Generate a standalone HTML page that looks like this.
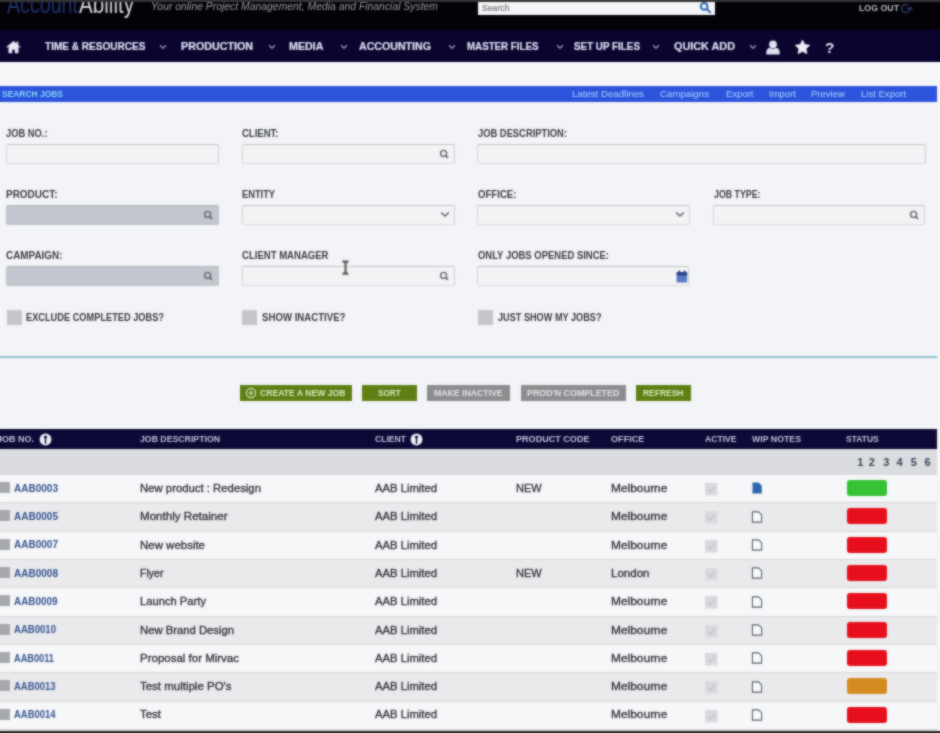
<!DOCTYPE html><html><head><meta charset="utf-8"><style>*{margin:0;padding:0;box-sizing:border-box}html,body{width:940px;height:733px;overflow:hidden;background:#f3f4f7;font-family:"Liberation Sans",sans-serif}.a{position:absolute;white-space:nowrap}.t{line-height:1}</style></head><body>
<div class="a" style="left:0;top:0;width:940px;height:733px;will-change:transform">
<div class="a" style="left:0;top:2px;width:940px;height:28px;background:#040209"></div>
<div class="a" style="left:478px;top:2px;width:237px;height:13px;background:#f6f6f9"></div>
<svg class="a" style="left:698px;top:1px" width="16" height="14" viewBox="0 0 16 14"><circle cx="6.2" cy="5.4" r="3.3" fill="none" stroke="#2c65b2" stroke-width="2"/><line x1="8.6" y1="7.9" x2="12.2" y2="11.2" stroke="#2c65b2" stroke-width="2.1" stroke-linecap="round"/></svg>
<svg class="a" style="left:900px;top:3px" width="13" height="11" viewBox="0 0 13 11"><path d="M8 2.2 A4 4 0 1 0 9.6 6.5" fill="none" stroke="#29345e" stroke-width="1.6"/><path d="M6.5 5.5 H12 M10 3.6 L12 5.5 L10 7.4" fill="none" stroke="#29345e" stroke-width="1.3"/></svg>
<div class="a" style="left:0;top:30px;width:940px;height:32px;background:#0b0430"></div>
<svg class="a" style="left:5px;top:40px" width="17" height="14" viewBox="0 0 17 14"><path d="M8.5 1 L1 7.2 L2.2 7.6 L3.5 6.6 V13.2 H7.2 V9.8 H9.8 V13.2 H13.5 V6.6 L14.8 7.6 L16 7.2 L13.3 4.9 V1.6 H11.6 V3.5 Z" fill="#e6eaf6"/></svg>
<svg class="a" style="left:159px;top:44px" width="8" height="6" viewBox="0 0 8 6"><path d="M1 1.2 L4 4.2 L7 1.2" fill="none" stroke="#8391c4" stroke-width="1.6"/></svg>
<svg class="a" style="left:268px;top:44px" width="8" height="6" viewBox="0 0 8 6"><path d="M1 1.2 L4 4.2 L7 1.2" fill="none" stroke="#8391c4" stroke-width="1.6"/></svg>
<svg class="a" style="left:340px;top:44px" width="8" height="6" viewBox="0 0 8 6"><path d="M1 1.2 L4 4.2 L7 1.2" fill="none" stroke="#8391c4" stroke-width="1.6"/></svg>
<svg class="a" style="left:448px;top:44px" width="8" height="6" viewBox="0 0 8 6"><path d="M1 1.2 L4 4.2 L7 1.2" fill="none" stroke="#8391c4" stroke-width="1.6"/></svg>
<svg class="a" style="left:556px;top:44px" width="8" height="6" viewBox="0 0 8 6"><path d="M1 1.2 L4 4.2 L7 1.2" fill="none" stroke="#8391c4" stroke-width="1.6"/></svg>
<svg class="a" style="left:652px;top:44px" width="8" height="6" viewBox="0 0 8 6"><path d="M1 1.2 L4 4.2 L7 1.2" fill="none" stroke="#8391c4" stroke-width="1.6"/></svg>
<svg class="a" style="left:748.5px;top:44px" width="8" height="6" viewBox="0 0 8 6"><path d="M1 1.2 L4 4.2 L7 1.2" fill="none" stroke="#8391c4" stroke-width="1.6"/></svg>
<svg class="a" style="left:765px;top:40px" width="16" height="15" viewBox="0 0 16 15"><circle cx="8" cy="4.3" r="3.9" fill="#dfe3f0"/><path d="M1.3 14.4 V11.8 C1.3 9.4 3.4 8 5 7.8 C6.8 9 9.2 9 11 7.8 C12.6 8 14.7 9.4 14.7 11.8 V14.4 Z" fill="#dfe3f0"/></svg>
<svg class="a" style="left:794px;top:39px" width="17" height="16" viewBox="0 0 17 16"><path d="M8.50 1.00 L10.67 5.61 L15.73 6.25 L12.02 9.74 L12.97 14.75 L8.50 12.30 L4.03 14.75 L4.98 9.74 L1.27 6.25 L6.33 5.61 Z" fill="#eef0f8" stroke="#eef0f8" stroke-width="0.8" stroke-linejoin="round"/></svg>
<div class="a" style="left:0;top:62px;width:940px;height:24px;background:#f6f6f8"></div>
<div class="a" style="left:0;top:62px;width:940px;height:2px;background:#fdfdfe"></div>
<div class="a" style="left:0;top:86px;width:937px;height:16px;background:#2d54dc"></div>
<div class="a" style="left:6px;top:144px;width:213px;height:20px;background:#f3f3f5;border:1px solid #d6d6d9;border-top-color:#c6c6c9;border-right-color:#d0d0d3;border-bottom-color:#dcdcdf;border-radius:2px"></div>
<div class="a" style="left:242px;top:144px;width:213px;height:20px;background:#f3f3f5;border:1px solid #d6d6d9;border-top-color:#c6c6c9;border-right-color:#d0d0d3;border-bottom-color:#dcdcdf;border-radius:2px"></div>
<svg class="a" style="left:439px;top:149px" width="10" height="10" viewBox="0 0 10 10"><circle cx="4.6" cy="4.4" r="3" fill="none" stroke="#616469" stroke-width="1.4"/><line x1="6.7" y1="6.5" x2="9" y2="8.8" stroke="#616469" stroke-width="1.7"/></svg>
<div class="a" style="left:477px;top:144px;width:449px;height:20px;background:#f3f3f5;border:1px solid #d6d6d9;border-top-color:#c6c6c9;border-right-color:#d0d0d3;border-bottom-color:#dcdcdf;border-radius:2px"></div>
<div class="a" style="left:6px;top:205px;width:213px;height:20px;background:#c4c7ce;border:1px solid #c0c3ca;border-top-color:#b3b6bd;border-radius:2px"></div>
<svg class="a" style="left:203px;top:210px" width="10" height="10" viewBox="0 0 10 10"><circle cx="4.6" cy="4.4" r="3" fill="none" stroke="#616469" stroke-width="1.4"/><line x1="6.7" y1="6.5" x2="9" y2="8.8" stroke="#616469" stroke-width="1.7"/></svg>
<div class="a" style="left:242px;top:205px;width:213px;height:20px;background:#f3f3f5;border:1px solid #d6d6d9;border-top-color:#c6c6c9;border-right-color:#d0d0d3;border-bottom-color:#dcdcdf;border-radius:2px"></div>
<svg class="a" style="left:440px;top:211px" width="10" height="7" viewBox="0 0 10 7"><path d="M1.2 1.5 L5 5 L8.8 1.5" fill="none" stroke="#5c5e63" stroke-width="1.4"/></svg>
<div class="a" style="left:477px;top:205px;width:213px;height:20px;background:#f3f3f5;border:1px solid #d6d6d9;border-top-color:#c6c6c9;border-right-color:#d0d0d3;border-bottom-color:#dcdcdf;border-radius:2px"></div>
<svg class="a" style="left:675px;top:211px" width="10" height="7" viewBox="0 0 10 7"><path d="M1.2 1.5 L5 5 L8.8 1.5" fill="none" stroke="#5c5e63" stroke-width="1.4"/></svg>
<div class="a" style="left:713px;top:205px;width:212px;height:20px;background:#f3f3f5;border:1px solid #d6d6d9;border-top-color:#c6c6c9;border-right-color:#d0d0d3;border-bottom-color:#dcdcdf;border-radius:2px"></div>
<svg class="a" style="left:909px;top:210px" width="10" height="10" viewBox="0 0 10 10"><circle cx="4.6" cy="4.4" r="3" fill="none" stroke="#616469" stroke-width="1.4"/><line x1="6.7" y1="6.5" x2="9" y2="8.8" stroke="#616469" stroke-width="1.7"/></svg>
<div class="a" style="left:6px;top:266px;width:213px;height:20px;background:#c4c7ce;border:1px solid #c0c3ca;border-top-color:#b3b6bd;border-radius:2px"></div>
<svg class="a" style="left:203px;top:271px" width="10" height="10" viewBox="0 0 10 10"><circle cx="4.6" cy="4.4" r="3" fill="none" stroke="#616469" stroke-width="1.4"/><line x1="6.7" y1="6.5" x2="9" y2="8.8" stroke="#616469" stroke-width="1.7"/></svg>
<div class="a" style="left:242px;top:266px;width:213px;height:20px;background:#f3f3f5;border:1px solid #d6d6d9;border-top-color:#c6c6c9;border-right-color:#d0d0d3;border-bottom-color:#dcdcdf;border-radius:2px"></div>
<svg class="a" style="left:439px;top:271px" width="10" height="10" viewBox="0 0 10 10"><circle cx="4.6" cy="4.4" r="3" fill="none" stroke="#616469" stroke-width="1.4"/><line x1="6.7" y1="6.5" x2="9" y2="8.8" stroke="#616469" stroke-width="1.7"/></svg>
<div class="a" style="left:477px;top:266px;width:212px;height:20px;background:#f3f3f5;border:1px solid #d6d6d9;border-top-color:#c6c6c9;border-right-color:#d0d0d3;border-bottom-color:#dcdcdf;border-radius:2px"></div>
<svg class="a" style="left:676px;top:269.5px" width="12" height="13" viewBox="0 0 12 13"><rect x="0.6" y="2" width="10.6" height="10.4" rx="1.2" fill="#5a7bc2"/><rect x="0.6" y="2" width="10.6" height="3.4" rx="1" fill="#2c4587"/><rect x="2.4" y="0.6" width="1.8" height="2.6" rx="0.6" fill="#2c4587"/><rect x="7.6" y="0.6" width="1.8" height="2.6" rx="0.6" fill="#2c4587"/></svg>
<svg class="a" style="left:341px;top:260px" width="9" height="16" viewBox="0 0 9 16"><path d="M1.3 0.6 H7.6 V2 L5.6 3.6 V11.8 L7.6 13.4 V14.8 H1.3 V13.4 L3.4 11.8 V3.6 L1.3 2 Z" fill="#606062"/></svg>
<div class="a" style="left:7px;top:310px;width:15px;height:15px;background:#c6c7ca"></div>
<div class="a" style="left:242px;top:310px;width:15px;height:15px;background:#c6c7ca"></div>
<div class="a" style="left:478px;top:310px;width:15px;height:15px;background:#c6c7ca"></div>
<div class="a" style="left:0;top:356px;width:937px;height:2px;background:#8fc2cf"></div>
<div class="a" style="left:240px;top:385px;width:112px;height:15.5px;background:#5f7f15"></div>
<svg class="a" style="left:245px;top:387px" width="12" height="12" viewBox="0 0 12 12"><circle cx="6" cy="6" r="4.6" fill="none" stroke="#dfe8c8" stroke-width="1.1"/><path d="M6 3.6 V8.4 M3.6 6 H8.4" stroke="#dfe8c8" stroke-width="1.1"/></svg>
<div class="a" style="left:362px;top:385px;width:55px;height:15.5px;background:#5f7f15"></div>
<div class="a" style="left:427px;top:385px;width:83px;height:15.5px;background:#8d8e91"></div>
<div class="a" style="left:521px;top:385px;width:105px;height:15.5px;background:#8d8e91"></div>
<div class="a" style="left:636px;top:385px;width:55px;height:15.5px;background:#5f7f15"></div>
<div class="a" style="left:0;top:429px;width:937px;height:20px;background:#0d0a38"></div>
<svg class="a" style="left:39px;top:432.5px" width="13" height="13" viewBox="0 0 13 13"><circle cx="6.5" cy="6.5" r="5.9" fill="#eef0f6"/><circle cx="6.5" cy="4" r="1.6" fill="#0d0a38"/><path d="M5.8 5 H7.2 V10.8 H5.8 Z" fill="#0d0a38"/></svg>
<svg class="a" style="left:410px;top:432.5px" width="13" height="13" viewBox="0 0 13 13"><circle cx="6.5" cy="6.5" r="5.9" fill="#eef0f6"/><circle cx="6.5" cy="4" r="1.6" fill="#0d0a38"/><path d="M5.8 5 H7.2 V10.8 H5.8 Z" fill="#0d0a38"/></svg>
<div class="a" style="left:0;top:449px;width:937px;height:26px;background:#dbdcdf"></div>
<div class="a" style="left:0;top:475.0px;width:937px;height:28px;background:#f6f7f9"></div>
<div class="a" style="left:0;top:502.3px;width:937px;height:2px;background:#dadadd"></div>
<div class="a" style="left:0;top:482.0px;width:10px;height:11px;background:#a8a9ac"></div>
<svg class="a" style="left:704.5px;top:483.0px" width="13" height="13" viewBox="0 0 13 13"><rect x="0" y="0" width="12.5" height="12.5" fill="#d9dadd"/><path d="M3 6.3 L5.6 8.8 L10 3.8" fill="none" stroke="#c0c1c5" stroke-width="1.2"/></svg>
<svg class="a" style="left:751px;top:482.0px" width="12" height="12" viewBox="0 0 12 12"><path d="M1.5 0.5 H7.5 L10.8 3.8 V11.5 H1.5 Z" fill="#2b68ad"/></svg>
<div class="a" style="left:847px;top:480.0px;width:40px;height:16px;border-radius:3px;background:#36c236"></div>
<div class="a" style="left:0;top:503.33px;width:937px;height:28px;background:#eaeaed"></div>
<div class="a" style="left:0;top:530.63px;width:937px;height:2px;background:#dadadd"></div>
<div class="a" style="left:0;top:510.33px;width:10px;height:11px;background:#a8a9ac"></div>
<svg class="a" style="left:704.5px;top:511.33px" width="13" height="13" viewBox="0 0 13 13"><rect x="0" y="0" width="12.5" height="12.5" fill="#d9dadd"/><path d="M3 6.3 L5.6 8.8 L10 3.8" fill="none" stroke="#c0c1c5" stroke-width="1.2"/></svg>
<svg class="a" style="left:751px;top:510.83px" width="12" height="12" viewBox="0 0 12 12"><path d="M1.4 0.9 H7.6 L10.6 3.9 V11.1 H1.4 Z" fill="#fafafc" stroke="#56606c" stroke-width="1.1" stroke-linejoin="round"/></svg>
<div class="a" style="left:847px;top:508.33px;width:40px;height:16px;border-radius:3px;background:#e6101c"></div>
<div class="a" style="left:0;top:531.66px;width:937px;height:28px;background:#f6f7f9"></div>
<div class="a" style="left:0;top:558.9599999999999px;width:937px;height:2px;background:#dadadd"></div>
<div class="a" style="left:0;top:538.66px;width:10px;height:11px;background:#a8a9ac"></div>
<svg class="a" style="left:704.5px;top:539.66px" width="13" height="13" viewBox="0 0 13 13"><rect x="0" y="0" width="12.5" height="12.5" fill="#d9dadd"/><path d="M3 6.3 L5.6 8.8 L10 3.8" fill="none" stroke="#c0c1c5" stroke-width="1.2"/></svg>
<svg class="a" style="left:751px;top:539.16px" width="12" height="12" viewBox="0 0 12 12"><path d="M1.4 0.9 H7.6 L10.6 3.9 V11.1 H1.4 Z" fill="#fafafc" stroke="#56606c" stroke-width="1.1" stroke-linejoin="round"/></svg>
<div class="a" style="left:847px;top:536.66px;width:40px;height:16px;border-radius:3px;background:#e6101c"></div>
<div class="a" style="left:0;top:559.99px;width:937px;height:28px;background:#eaeaed"></div>
<div class="a" style="left:0;top:587.29px;width:937px;height:2px;background:#dadadd"></div>
<div class="a" style="left:0;top:566.99px;width:10px;height:11px;background:#a8a9ac"></div>
<svg class="a" style="left:704.5px;top:567.99px" width="13" height="13" viewBox="0 0 13 13"><rect x="0" y="0" width="12.5" height="12.5" fill="#d9dadd"/><path d="M3 6.3 L5.6 8.8 L10 3.8" fill="none" stroke="#c0c1c5" stroke-width="1.2"/></svg>
<svg class="a" style="left:751px;top:567.49px" width="12" height="12" viewBox="0 0 12 12"><path d="M1.4 0.9 H7.6 L10.6 3.9 V11.1 H1.4 Z" fill="#fafafc" stroke="#56606c" stroke-width="1.1" stroke-linejoin="round"/></svg>
<div class="a" style="left:847px;top:564.99px;width:40px;height:16px;border-radius:3px;background:#e6101c"></div>
<div class="a" style="left:0;top:588.32px;width:937px;height:28px;background:#f6f7f9"></div>
<div class="a" style="left:0;top:615.62px;width:937px;height:2px;background:#dadadd"></div>
<div class="a" style="left:0;top:595.32px;width:10px;height:11px;background:#a8a9ac"></div>
<svg class="a" style="left:704.5px;top:596.32px" width="13" height="13" viewBox="0 0 13 13"><rect x="0" y="0" width="12.5" height="12.5" fill="#d9dadd"/><path d="M3 6.3 L5.6 8.8 L10 3.8" fill="none" stroke="#c0c1c5" stroke-width="1.2"/></svg>
<svg class="a" style="left:751px;top:595.82px" width="12" height="12" viewBox="0 0 12 12"><path d="M1.4 0.9 H7.6 L10.6 3.9 V11.1 H1.4 Z" fill="#fafafc" stroke="#56606c" stroke-width="1.1" stroke-linejoin="round"/></svg>
<div class="a" style="left:847px;top:593.32px;width:40px;height:16px;border-radius:3px;background:#e6101c"></div>
<div class="a" style="left:0;top:616.65px;width:937px;height:28px;background:#eaeaed"></div>
<div class="a" style="left:0;top:643.9499999999999px;width:937px;height:2px;background:#dadadd"></div>
<div class="a" style="left:0;top:623.65px;width:10px;height:11px;background:#a8a9ac"></div>
<svg class="a" style="left:704.5px;top:624.65px" width="13" height="13" viewBox="0 0 13 13"><rect x="0" y="0" width="12.5" height="12.5" fill="#d9dadd"/><path d="M3 6.3 L5.6 8.8 L10 3.8" fill="none" stroke="#c0c1c5" stroke-width="1.2"/></svg>
<svg class="a" style="left:751px;top:624.15px" width="12" height="12" viewBox="0 0 12 12"><path d="M1.4 0.9 H7.6 L10.6 3.9 V11.1 H1.4 Z" fill="#fafafc" stroke="#56606c" stroke-width="1.1" stroke-linejoin="round"/></svg>
<div class="a" style="left:847px;top:621.65px;width:40px;height:16px;border-radius:3px;background:#e6101c"></div>
<div class="a" style="left:0;top:644.98px;width:937px;height:28px;background:#f6f7f9"></div>
<div class="a" style="left:0;top:672.28px;width:937px;height:2px;background:#dadadd"></div>
<div class="a" style="left:0;top:651.98px;width:10px;height:11px;background:#a8a9ac"></div>
<svg class="a" style="left:704.5px;top:652.98px" width="13" height="13" viewBox="0 0 13 13"><rect x="0" y="0" width="12.5" height="12.5" fill="#d9dadd"/><path d="M3 6.3 L5.6 8.8 L10 3.8" fill="none" stroke="#c0c1c5" stroke-width="1.2"/></svg>
<svg class="a" style="left:751px;top:652.48px" width="12" height="12" viewBox="0 0 12 12"><path d="M1.4 0.9 H7.6 L10.6 3.9 V11.1 H1.4 Z" fill="#fafafc" stroke="#56606c" stroke-width="1.1" stroke-linejoin="round"/></svg>
<div class="a" style="left:847px;top:649.98px;width:40px;height:16px;border-radius:3px;background:#e6101c"></div>
<div class="a" style="left:0;top:673.31px;width:937px;height:28px;background:#eaeaed"></div>
<div class="a" style="left:0;top:700.6099999999999px;width:937px;height:2px;background:#dadadd"></div>
<div class="a" style="left:0;top:680.31px;width:10px;height:11px;background:#a8a9ac"></div>
<svg class="a" style="left:704.5px;top:681.31px" width="13" height="13" viewBox="0 0 13 13"><rect x="0" y="0" width="12.5" height="12.5" fill="#d9dadd"/><path d="M3 6.3 L5.6 8.8 L10 3.8" fill="none" stroke="#c0c1c5" stroke-width="1.2"/></svg>
<svg class="a" style="left:751px;top:680.81px" width="12" height="12" viewBox="0 0 12 12"><path d="M1.4 0.9 H7.6 L10.6 3.9 V11.1 H1.4 Z" fill="#fafafc" stroke="#56606c" stroke-width="1.1" stroke-linejoin="round"/></svg>
<div class="a" style="left:847px;top:678.31px;width:40px;height:16px;border-radius:3px;background:#d48c22"></div>
<div class="a" style="left:0;top:701.64px;width:937px;height:28px;background:#f6f7f9"></div>
<div class="a" style="left:0;top:728.9399999999999px;width:937px;height:2px;background:#dadadd"></div>
<div class="a" style="left:0;top:708.64px;width:10px;height:11px;background:#a8a9ac"></div>
<svg class="a" style="left:704.5px;top:709.64px" width="13" height="13" viewBox="0 0 13 13"><rect x="0" y="0" width="12.5" height="12.5" fill="#d9dadd"/><path d="M3 6.3 L5.6 8.8 L10 3.8" fill="none" stroke="#c0c1c5" stroke-width="1.2"/></svg>
<svg class="a" style="left:751px;top:709.14px" width="12" height="12" viewBox="0 0 12 12"><path d="M1.4 0.9 H7.6 L10.6 3.9 V11.1 H1.4 Z" fill="#fafafc" stroke="#56606c" stroke-width="1.1" stroke-linejoin="round"/></svg>
<div class="a" style="left:847px;top:706.64px;width:40px;height:16px;border-radius:3px;background:#e6101c"></div>
<div class="a" style="left:0;top:731px;width:940px;height:2px;background:#2a2a2c"></div>
<div class="a t" style="left:7.00px;top:-9.01px;font-size:26px;font-weight:400;font-style:normal;color:#1e336c;transform:scaleX(0.7557);transform-origin:0 0;">Account</div>
<div class="a t" style="left:79.00px;top:-9.01px;font-size:26px;font-weight:400;font-style:normal;color:#d8d8de;transform:scaleX(0.7930);transform-origin:0 0;">Ability</div>
<div class="a t" style="left:151.00px;top:2.04px;font-size:10px;font-weight:400;font-style:italic;color:#9a9a9e;transform:scaleX(1.0389);transform-origin:0 0;">Your online Project Management, Media and Financial System</div>
<div class="a t" style="left:482.00px;top:3.81px;font-size:9.2px;font-weight:400;font-style:normal;color:#78787c;transform:scaleX(0.9442);transform-origin:0 0;-webkit-text-stroke:0.2px #78787c;">Search</div>
<div class="a t" style="left:859.00px;top:3.16px;font-size:9.5px;font-weight:700;font-style:normal;color:#bdbdc2;transform:scaleX(0.9242);transform-origin:0 0;">LOG OUT</div>
<div class="a t" style="left:44.50px;top:41.29px;font-size:11px;font-weight:700;font-style:normal;color:#dde2f4;transform:scaleX(0.9135);transform-origin:0 0;-webkit-text-stroke:0.2px #dde2f4;">TIME &amp; RESOURCES</div>
<div class="a t" style="left:181.00px;top:41.29px;font-size:11px;font-weight:700;font-style:normal;color:#dde2f4;transform:scaleX(0.9736);transform-origin:0 0;-webkit-text-stroke:0.2px #dde2f4;">PRODUCTION</div>
<div class="a t" style="left:288.50px;top:41.29px;font-size:11px;font-weight:700;font-style:normal;color:#dde2f4;transform:scaleX(0.9731);transform-origin:0 0;-webkit-text-stroke:0.2px #dde2f4;">MEDIA</div>
<div class="a t" style="left:359.00px;top:41.29px;font-size:11px;font-weight:700;font-style:normal;color:#dde2f4;transform:scaleX(0.9656);transform-origin:0 0;-webkit-text-stroke:0.2px #dde2f4;">ACCOUNTING</div>
<div class="a t" style="left:467.00px;top:41.29px;font-size:11px;font-weight:700;font-style:normal;color:#dde2f4;transform:scaleX(0.8863);transform-origin:0 0;-webkit-text-stroke:0.2px #dde2f4;">MASTER FILES</div>
<div class="a t" style="left:574.00px;top:41.29px;font-size:11px;font-weight:700;font-style:normal;color:#dde2f4;transform:scaleX(0.8947);transform-origin:0 0;-webkit-text-stroke:0.2px #dde2f4;">SET UP FILES</div>
<div class="a t" style="left:674.00px;top:41.29px;font-size:11px;font-weight:700;font-style:normal;color:#dde2f4;transform:scaleX(0.9849);transform-origin:0 0;-webkit-text-stroke:0.2px #dde2f4;">QUICK ADD</div>
<div class="a t" style="left:825.20px;top:40.93px;font-size:14.5px;font-weight:700;font-style:normal;color:#dfe6f4;transform:scaleX(1.0610);transform-origin:0 0;">?</div>
<div class="a t" style="left:2.00px;top:89.46px;font-size:9.5px;font-weight:700;font-style:normal;color:#86d8f8;transform:scaleX(0.8889);transform-origin:0 0;">SEARCH JOBS</div>
<div class="a t" style="left:571.70px;top:89.46px;font-size:9.5px;font-weight:400;font-style:normal;color:#a6d6ff;transform:scaleX(1.0158);transform-origin:0 0;">Latest Deadlines</div>
<div class="a t" style="left:660.00px;top:89.46px;font-size:9.5px;font-weight:400;font-style:normal;color:#a6d6ff;transform:scaleX(1.0195);transform-origin:0 0;">Campaigns</div>
<div class="a t" style="left:725.50px;top:89.46px;font-size:9.5px;font-weight:400;font-style:normal;color:#a6d6ff;transform:scaleX(1.0011);transform-origin:0 0;">Export</div>
<div class="a t" style="left:768.70px;top:89.46px;font-size:9.5px;font-weight:400;font-style:normal;color:#a6d6ff;transform:scaleX(1.0023);transform-origin:0 0;">Import</div>
<div class="a t" style="left:810.90px;top:89.46px;font-size:9.5px;font-weight:400;font-style:normal;color:#a6d6ff;transform:scaleX(1.0001);transform-origin:0 0;">Preview</div>
<div class="a t" style="left:860.90px;top:89.46px;font-size:9.5px;font-weight:400;font-style:normal;color:#a6d6ff;transform:scaleX(1.0047);transform-origin:0 0;">List Export</div>
<div class="a t" style="left:6.00px;top:129.03px;font-size:10px;font-weight:700;font-style:normal;color:#3a3c41;transform:scaleX(0.9336);transform-origin:0 0;">JOB NO.:</div>
<div class="a t" style="left:242.00px;top:129.03px;font-size:10px;font-weight:700;font-style:normal;color:#3a3c41;transform:scaleX(0.9519);transform-origin:0 0;">CLIENT:</div>
<div class="a t" style="left:477.50px;top:129.03px;font-size:10px;font-weight:700;font-style:normal;color:#3a3c41;transform:scaleX(0.9367);transform-origin:0 0;">JOB DESCRIPTION:</div>
<div class="a t" style="left:6.00px;top:190.13px;font-size:10px;font-weight:700;font-style:normal;color:#3a3c41;transform:scaleX(0.9967);transform-origin:0 0;">PRODUCT:</div>
<div class="a t" style="left:242.00px;top:190.13px;font-size:10px;font-weight:700;font-style:normal;color:#3a3c41;transform:scaleX(0.9279);transform-origin:0 0;">ENTITY</div>
<div class="a t" style="left:477.50px;top:190.13px;font-size:10px;font-weight:700;font-style:normal;color:#3a3c41;transform:scaleX(0.9625);transform-origin:0 0;">OFFICE:</div>
<div class="a t" style="left:713.50px;top:190.13px;font-size:10px;font-weight:700;font-style:normal;color:#3a3c41;transform:scaleX(0.8807);transform-origin:0 0;">JOB TYPE:</div>
<div class="a t" style="left:6.00px;top:251.14px;font-size:10px;font-weight:700;font-style:normal;color:#3a3c41;transform:scaleX(0.9907);transform-origin:0 0;">CAMPAIGN:</div>
<div class="a t" style="left:242.00px;top:251.14px;font-size:10px;font-weight:700;font-style:normal;color:#3a3c41;transform:scaleX(0.9551);transform-origin:0 0;">CLIENT MANAGER</div>
<div class="a t" style="left:477.50px;top:251.14px;font-size:10px;font-weight:700;font-style:normal;color:#3a3c41;transform:scaleX(0.9467);transform-origin:0 0;">ONLY JOBS OPENED SINCE:</div>
<div class="a t" style="left:26.00px;top:312.84px;font-size:10px;font-weight:700;font-style:normal;color:#3a3c41;transform:scaleX(0.9233);transform-origin:0 0;">EXCLUDE COMPLETED JOBS?</div>
<div class="a t" style="left:261.50px;top:312.84px;font-size:10px;font-weight:700;font-style:normal;color:#3a3c41;transform:scaleX(0.9634);transform-origin:0 0;">SHOW INACTIVE?</div>
<div class="a t" style="left:497.50px;top:312.84px;font-size:10px;font-weight:700;font-style:normal;color:#3a3c41;transform:scaleX(0.9145);transform-origin:0 0;">JUST SHOW MY JOBS?</div>
<div class="a t" style="left:259.90px;top:388.95px;font-size:8.8px;font-weight:700;font-style:normal;color:#dbe8bd;transform:scaleX(0.9808);transform-origin:0 0;">CREATE A NEW JOB</div>
<div class="a t" style="left:377.70px;top:388.95px;font-size:8.8px;font-weight:700;font-style:normal;color:#dbe8bd;transform:scaleX(0.9289);transform-origin:0 0;">SORT</div>
<div class="a t" style="left:433.80px;top:388.95px;font-size:8.8px;font-weight:700;font-style:normal;color:#e2e2e4;transform:scaleX(0.9884);transform-origin:0 0;">MAKE INACTIVE</div>
<div class="a t" style="left:527.10px;top:388.95px;font-size:8.8px;font-weight:700;font-style:normal;color:#e2e2e4;transform:scaleX(1.0084);transform-origin:0 0;">PROD'N COMPLETED</div>
<div class="a t" style="left:643.30px;top:388.95px;font-size:8.8px;font-weight:700;font-style:normal;color:#dbe8bd;transform:scaleX(0.9608);transform-origin:0 0;">REFRESH</div>
<div class="a t" style="left:-3.00px;top:433.90px;font-size:9.8px;font-weight:700;font-style:normal;color:#bcc1da;transform:scaleX(0.9182);transform-origin:0 0;">JOB NO.</div>
<div class="a t" style="left:140.00px;top:433.90px;font-size:9.8px;font-weight:700;font-style:normal;color:#bcc1da;transform:scaleX(0.8906);transform-origin:0 0;">JOB DESCRIPTION</div>
<div class="a t" style="left:375.20px;top:433.90px;font-size:9.8px;font-weight:700;font-style:normal;color:#bcc1da;transform:scaleX(0.8792);transform-origin:0 0;">CLIENT</div>
<div class="a t" style="left:516.20px;top:433.90px;font-size:9.8px;font-weight:700;font-style:normal;color:#bcc1da;transform:scaleX(0.9249);transform-origin:0 0;">PRODUCT CODE</div>
<div class="a t" style="left:610.60px;top:433.90px;font-size:9.8px;font-weight:700;font-style:normal;color:#bcc1da;transform:scaleX(0.9298);transform-origin:0 0;">OFFICE</div>
<div class="a t" style="left:705.00px;top:433.90px;font-size:9.8px;font-weight:700;font-style:normal;color:#bcc1da;transform:scaleX(0.8765);transform-origin:0 0;">ACTIVE</div>
<div class="a t" style="left:752.00px;top:433.90px;font-size:9.8px;font-weight:700;font-style:normal;color:#bcc1da;transform:scaleX(0.8942);transform-origin:0 0;">WIP NOTES</div>
<div class="a t" style="left:846.00px;top:433.90px;font-size:9.8px;font-weight:700;font-style:normal;color:#bcc1da;transform:scaleX(0.8666);transform-origin:0 0;">STATUS</div>
<div class="a t" style="left:857.24px;top:456.99px;font-size:11px;font-weight:700;font-style:normal;color:#3a4458;">1</div>
<div class="a t" style="left:868.84px;top:456.99px;font-size:11px;font-weight:700;font-style:normal;color:#3a4458;">2</div>
<div class="a t" style="left:883.14px;top:456.99px;font-size:11px;font-weight:700;font-style:normal;color:#3a4458;">3</div>
<div class="a t" style="left:896.54px;top:456.99px;font-size:11px;font-weight:700;font-style:normal;color:#3a4458;">4</div>
<div class="a t" style="left:910.64px;top:456.99px;font-size:11px;font-weight:700;font-style:normal;color:#3a4458;">5</div>
<div class="a t" style="left:924.54px;top:456.99px;font-size:11px;font-weight:700;font-style:normal;color:#3a4458;">6</div>
<div class="a t" style="left:14.30px;top:483.84px;font-size:10px;font-weight:700;font-style:normal;color:#36548f;transform:scaleX(1.0018);transform-origin:0 0;">AAB0003</div>
<div class="a t" style="left:140.00px;top:482.85px;font-size:11.4px;font-weight:400;font-style:normal;color:#34363b;transform:scaleX(0.9952);transform-origin:0 0;-webkit-text-stroke:0.35px #34363b;">New product : Redesign</div>
<div class="a t" style="left:375.00px;top:482.85px;font-size:11.4px;font-weight:400;font-style:normal;color:#34363b;transform:scaleX(0.9890);transform-origin:0 0;-webkit-text-stroke:0.35px #34363b;">AAB Limited</div>
<div class="a t" style="left:516.00px;top:482.85px;font-size:11.4px;font-weight:400;font-style:normal;color:#34363b;transform:scaleX(0.9632);transform-origin:0 0;-webkit-text-stroke:0.35px #34363b;">NEW</div>
<div class="a t" style="left:611.00px;top:482.85px;font-size:11.4px;font-weight:400;font-style:normal;color:#34363b;transform:scaleX(1.0478);transform-origin:0 0;-webkit-text-stroke:0.35px #34363b;">Melbourne</div>
<div class="a t" style="left:14.30px;top:512.16px;font-size:10px;font-weight:700;font-style:normal;color:#36548f;transform:scaleX(1.0018);transform-origin:0 0;">AAB0005</div>
<div class="a t" style="left:140.00px;top:511.18px;font-size:11.4px;font-weight:400;font-style:normal;color:#34363b;transform:scaleX(1.0173);transform-origin:0 0;-webkit-text-stroke:0.35px #34363b;">Monthly Retainer</div>
<div class="a t" style="left:375.00px;top:511.18px;font-size:11.4px;font-weight:400;font-style:normal;color:#34363b;transform:scaleX(0.9890);transform-origin:0 0;-webkit-text-stroke:0.35px #34363b;">AAB Limited</div>
<div class="a t" style="left:611.00px;top:511.18px;font-size:11.4px;font-weight:400;font-style:normal;color:#34363b;transform:scaleX(1.0478);transform-origin:0 0;-webkit-text-stroke:0.35px #34363b;">Melbourne</div>
<div class="a t" style="left:14.30px;top:540.49px;font-size:10px;font-weight:700;font-style:normal;color:#36548f;transform:scaleX(1.0018);transform-origin:0 0;">AAB0007</div>
<div class="a t" style="left:140.00px;top:539.51px;font-size:11.4px;font-weight:400;font-style:normal;color:#34363b;transform:scaleX(1.0065);transform-origin:0 0;-webkit-text-stroke:0.35px #34363b;">New website</div>
<div class="a t" style="left:375.00px;top:539.51px;font-size:11.4px;font-weight:400;font-style:normal;color:#34363b;transform:scaleX(0.9890);transform-origin:0 0;-webkit-text-stroke:0.35px #34363b;">AAB Limited</div>
<div class="a t" style="left:611.00px;top:539.51px;font-size:11.4px;font-weight:400;font-style:normal;color:#34363b;transform:scaleX(1.0478);transform-origin:0 0;-webkit-text-stroke:0.35px #34363b;">Melbourne</div>
<div class="a t" style="left:14.30px;top:568.82px;font-size:10px;font-weight:700;font-style:normal;color:#36548f;transform:scaleX(1.0018);transform-origin:0 0;">AAB0008</div>
<div class="a t" style="left:140.00px;top:567.84px;font-size:11.4px;font-weight:400;font-style:normal;color:#34363b;transform:scaleX(0.9284);transform-origin:0 0;-webkit-text-stroke:0.35px #34363b;">Flyer</div>
<div class="a t" style="left:375.00px;top:567.84px;font-size:11.4px;font-weight:400;font-style:normal;color:#34363b;transform:scaleX(0.9890);transform-origin:0 0;-webkit-text-stroke:0.35px #34363b;">AAB Limited</div>
<div class="a t" style="left:516.00px;top:567.84px;font-size:11.4px;font-weight:400;font-style:normal;color:#34363b;transform:scaleX(0.9632);transform-origin:0 0;-webkit-text-stroke:0.35px #34363b;">NEW</div>
<div class="a t" style="left:611.00px;top:567.84px;font-size:11.4px;font-weight:400;font-style:normal;color:#34363b;transform:scaleX(1.0127);transform-origin:0 0;-webkit-text-stroke:0.35px #34363b;">London</div>
<div class="a t" style="left:14.30px;top:597.15px;font-size:10px;font-weight:700;font-style:normal;color:#36548f;transform:scaleX(0.9904);transform-origin:0 0;">AAB0009</div>
<div class="a t" style="left:140.00px;top:596.17px;font-size:11.4px;font-weight:400;font-style:normal;color:#34363b;transform:scaleX(0.9832);transform-origin:0 0;-webkit-text-stroke:0.35px #34363b;">Launch Party</div>
<div class="a t" style="left:375.00px;top:596.17px;font-size:11.4px;font-weight:400;font-style:normal;color:#34363b;transform:scaleX(0.9890);transform-origin:0 0;-webkit-text-stroke:0.35px #34363b;">AAB Limited</div>
<div class="a t" style="left:611.00px;top:596.17px;font-size:11.4px;font-weight:400;font-style:normal;color:#34363b;transform:scaleX(1.0478);transform-origin:0 0;-webkit-text-stroke:0.35px #34363b;">Melbourne</div>
<div class="a t" style="left:14.30px;top:625.48px;font-size:10px;font-weight:700;font-style:normal;color:#36548f;transform:scaleX(0.9562);transform-origin:0 0;">AAB0010</div>
<div class="a t" style="left:140.00px;top:624.50px;font-size:11.4px;font-weight:400;font-style:normal;color:#34363b;transform:scaleX(0.9898);transform-origin:0 0;-webkit-text-stroke:0.35px #34363b;">New Brand Design</div>
<div class="a t" style="left:375.00px;top:624.50px;font-size:11.4px;font-weight:400;font-style:normal;color:#34363b;transform:scaleX(0.9890);transform-origin:0 0;-webkit-text-stroke:0.35px #34363b;">AAB Limited</div>
<div class="a t" style="left:611.00px;top:624.50px;font-size:11.4px;font-weight:400;font-style:normal;color:#34363b;transform:scaleX(1.0478);transform-origin:0 0;-webkit-text-stroke:0.35px #34363b;">Melbourne</div>
<div class="a t" style="left:14.30px;top:653.81px;font-size:10px;font-weight:700;font-style:normal;color:#36548f;transform:scaleX(0.9225);transform-origin:0 0;">AAB0011</div>
<div class="a t" style="left:140.00px;top:652.83px;font-size:11.4px;font-weight:400;font-style:normal;color:#34363b;transform:scaleX(1.0089);transform-origin:0 0;-webkit-text-stroke:0.35px #34363b;">Proposal for Mirvac</div>
<div class="a t" style="left:375.00px;top:652.83px;font-size:11.4px;font-weight:400;font-style:normal;color:#34363b;transform:scaleX(0.9890);transform-origin:0 0;-webkit-text-stroke:0.35px #34363b;">AAB Limited</div>
<div class="a t" style="left:611.00px;top:652.83px;font-size:11.4px;font-weight:400;font-style:normal;color:#34363b;transform:scaleX(1.0478);transform-origin:0 0;-webkit-text-stroke:0.35px #34363b;">Melbourne</div>
<div class="a t" style="left:14.30px;top:682.14px;font-size:10px;font-weight:700;font-style:normal;color:#36548f;transform:scaleX(0.9449);transform-origin:0 0;">AAB0013</div>
<div class="a t" style="left:140.00px;top:681.16px;font-size:11.4px;font-weight:400;font-style:normal;color:#34363b;transform:scaleX(1.0077);transform-origin:0 0;-webkit-text-stroke:0.35px #34363b;">Test multiple PO&#39;s</div>
<div class="a t" style="left:375.00px;top:681.16px;font-size:11.4px;font-weight:400;font-style:normal;color:#34363b;transform:scaleX(0.9890);transform-origin:0 0;-webkit-text-stroke:0.35px #34363b;">AAB Limited</div>
<div class="a t" style="left:611.00px;top:681.16px;font-size:11.4px;font-weight:400;font-style:normal;color:#34363b;transform:scaleX(1.0478);transform-origin:0 0;-webkit-text-stroke:0.35px #34363b;">Melbourne</div>
<div class="a t" style="left:14.30px;top:710.47px;font-size:10px;font-weight:700;font-style:normal;color:#36548f;transform:scaleX(0.9449);transform-origin:0 0;">AAB0014</div>
<div class="a t" style="left:140.00px;top:709.49px;font-size:11.4px;font-weight:400;font-style:normal;color:#34363b;transform:scaleX(1.0052);transform-origin:0 0;-webkit-text-stroke:0.35px #34363b;">Test</div>
<div class="a t" style="left:375.00px;top:709.49px;font-size:11.4px;font-weight:400;font-style:normal;color:#34363b;transform:scaleX(0.9890);transform-origin:0 0;-webkit-text-stroke:0.35px #34363b;">AAB Limited</div>
<div class="a t" style="left:611.00px;top:709.49px;font-size:11.4px;font-weight:400;font-style:normal;color:#34363b;transform:scaleX(1.0478);transform-origin:0 0;-webkit-text-stroke:0.35px #34363b;">Melbourne</div>
<div class="a" style="left:0;top:0;width:940px;height:2px;background:#343434"></div>
</div>
<div class="a" style="left:0;top:0;width:940px;height:733px;backdrop-filter:blur(1px);opacity:0.65"></div>
</body></html>
